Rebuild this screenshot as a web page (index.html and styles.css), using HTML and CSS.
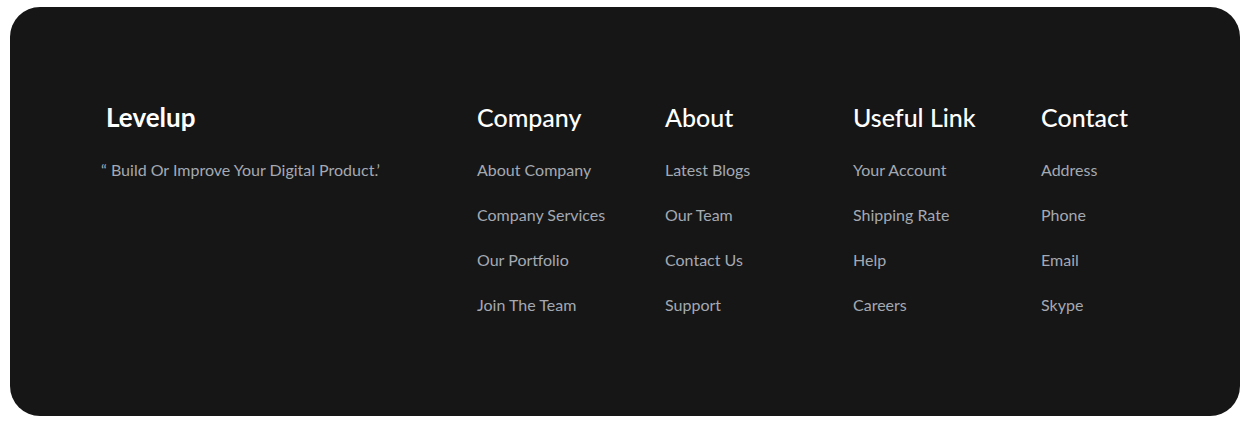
FILE: index.html
```html
<!DOCTYPE html>
<html>
<head>
<meta charset="utf-8">
<link rel="stylesheet" href="styles.css">
</head>
<body>
<footer class="footer">
  <div class="brand">
    <h2 class="logo">Levelup</h2>
    <p class="tagline">“ Build Or Improve Your Digital Product.’</p>
  </div>
  <div class="col">
    <h3 class="col-title">Company</h3>
    <ul class="links">
      <li>About Company</li>
      <li>Company Services</li>
      <li>Our Portfolio</li>
      <li>Join The Team</li>
    </ul>
  </div>
  <div class="col">
    <h3 class="col-title">About</h3>
    <ul class="links">
      <li>Latest Blogs</li>
      <li>Our Team</li>
      <li>Contact Us</li>
      <li>Support</li>
    </ul>
  </div>
  <div class="col">
    <h3 class="col-title">Useful Link</h3>
    <ul class="links">
      <li>Your Account</li>
      <li>Shipping Rate</li>
      <li>Help</li>
      <li>Careers</li>
    </ul>
  </div>
  <div class="col">
    <h3 class="col-title">Contact</h3>
    <ul class="links">
      <li>Address</li>
      <li>Phone</li>
      <li>Email</li>
      <li>Skype</li>
    </ul>
  </div>
</footer>
</body>
</html>
```
FILE: styles.css
```css
html, body {
  margin: 0;
  padding: 0;
  background: #ffffff;
}
body {
  padding: 7px 8px 7px 10px;
  font-family: "Lato", "Noto Sans", sans-serif;
}
.footer {
  background: #161616;
  border-radius: 30px;
  height: 409px;
  box-sizing: border-box;
  padding: 95px 0 0 91px;
  display: grid;
  grid-template-columns: 376px 188px 188px 188px 188px;
  align-items: start;
}
.logo {
  margin: 0 0 0 5px;
  font-size: 26px;
  line-height: 30px;
  font-weight: 700;
  color: #ffffff;
}
.tagline {
  margin: 27px 0 0;
  font-size: 16px;
  line-height: 21px;
  color: #a4a9b2;
}
.col-title {
  margin: 0;
  font-size: 25px;
  line-height: 30px;
  font-weight: 500;
  color: #ffffff;
}
.links {
  list-style: none;
  margin: 27px 0 0;
  padding: 0;
  display: flex;
  flex-direction: column;
  gap: 24px;
}
.links li {
  font-size: 16px;
  line-height: 21px;
  color: #a4a9b2;
}
```
